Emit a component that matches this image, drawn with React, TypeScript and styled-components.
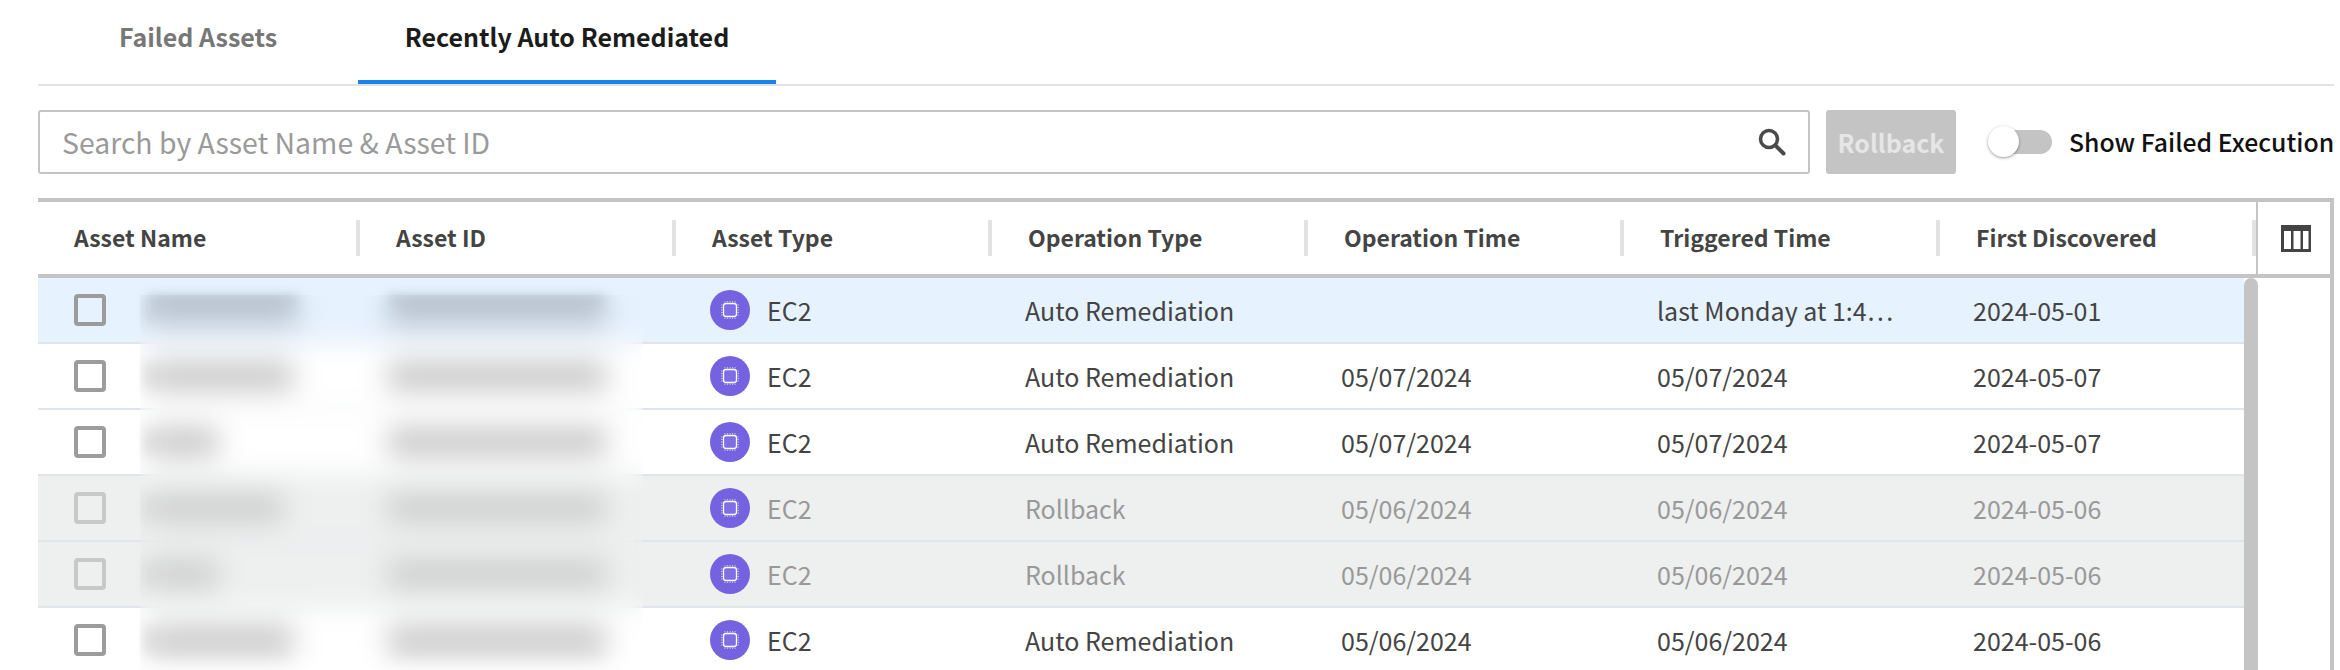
import styled, { createGlobalStyle } from "styled-components";

const FONT = `"Noto Sans CJK SC", "Noto Sans", sans-serif`;

const GlobalStyle = createGlobalStyle`
  html, body {
    margin: 0;
    padding: 0;
    background: #fff;
    overflow: hidden;
  }
  * {
    box-sizing: border-box;
  }
`;

const Page = styled.div`
  width: 2340px;
  height: 670px;
  overflow: hidden;
  padding-left: 38px;
  font-family: ${FONT};
  color: #444;
`;

const Tabs = styled.div`
  display: flex;
  width: 2296px;
  height: 86px;
  border-bottom: 2px solid #e2e2e2;
`;

const Tab = styled.div<{ $active?: boolean; $width: number }>`
  width: ${(p) => p.$width}px;
  height: 84px;
  display: flex;
  align-items: center;
  justify-content: center;
  padding-bottom: 9px;
  font-size: 25px;
  font-weight: 700;
  color: ${(p) => (p.$active ? "#1c1c1c" : "#777")};
  border-bottom: 4px solid ${(p) => (p.$active ? "#1b84ec" : "transparent")};
`;

const Toolbar = styled.div`
  display: flex;
  align-items: center;
  height: 64px;
  margin-top: 24px;
`;

const SearchBox = styled.div`
  width: 1772px;
  height: 64px;
  flex: none;
  display: flex;
  align-items: center;
  padding: 0 22px;
  border: 2px solid #c4c4c4;
  border-radius: 3px;
`;

const SearchInput = styled.input`
  flex: 1;
  height: 46px;
  border: none;
  outline: none;
  padding: 0 0 2px;
  font-family: ${FONT};
  font-size: 28.4px;
  color: #444;

  &::placeholder {
    color: #9a9a9a;
    opacity: 1;
  }
`;

const RollbackButton = styled.button`
  width: 130px;
  height: 64px;
  flex: none;
  margin-left: 16px;
  border: none;
  border-radius: 3px;
  padding: 0;
  background: #c4c4c4;
  color: #e6e6e6;
  font-family: ${FONT};
  font-size: 25px;
  font-weight: 700;
`;

const Toggle = styled.div`
  position: relative;
  width: 60px;
  height: 24px;
  flex: none;
  margin-left: 36px;
  border-radius: 12px;
  background: #c4c4c4;
`;

const ToggleThumb = styled.div`
  position: absolute;
  left: -4px;
  top: -4px;
  width: 31px;
  height: 31px;
  border-radius: 50%;
  background: #fff;
  box-shadow: 0 1px 3px rgba(0, 0, 0, 0.4);
`;

const ToggleLabel = styled.div`
  margin-left: 17px;
  padding-bottom: 2px;
  font-size: 24.8px;
  font-weight: 500;
  color: #111;
  white-space: nowrap;
`;

const Table = styled.div`
  width: 2296px;
  margin-top: 24px;
  border-top: 4px solid #c4c4c4;
  border-right: 4px solid #c4c4c4;
`;

const HeaderRow = styled.div`
  display: flex;
  height: 76px;
  border-bottom: 4px solid #c4c4c4;
`;

const HeaderCells = styled.div`
  width: 2218px;
  display: grid;
  grid-template-columns: 322px repeat(6, 316px);
  align-items: center;
`;

const HeaderCell = styled.div`
  height: 36px;
  display: flex;
  align-items: center;
  padding: 0 0 2px 36px;
  border-right: 4px solid #e2e2e2;
  font-size: 23px;
  font-weight: 700;
  color: #444;
`;

const ColumnsButton = styled.div`
  flex: 1;
  display: flex;
  align-items: center;
  justify-content: center;
  border-left: 2px solid #c4c4c4;
  padding-left: 4px;
`;

const Body = styled.div`
  position: relative;
  display: flex;
  height: 400px;
  overflow: hidden;
`;

const Rows = styled.div`
  width: 2206px;
`;

const Row = styled.div<{ $tone?: "selected" | "disabled" }>`
  display: grid;
  grid-template-columns: 320px 316px 316px repeat(3, 316px) 306px;
  align-items: center;
  height: 66px;
  border-bottom: 2px solid #dfe5ea;
  font-size: 25px;
  color: ${(p) => (p.$tone === "disabled" ? "#999" : "#444")};
  background: ${(p) =>
    p.$tone === "selected"
      ? "#e6f2fe"
      : p.$tone === "disabled"
        ? "#eeefef"
        : "#fff"};
`;

const NameCell = styled.div`
  display: flex;
  align-items: center;
  padding-left: 36px;
`;

const Checkbox = styled.div<{ $disabled?: boolean }>`
  width: 32px;
  height: 32px;
  flex: none;
  border: 4px solid ${(p) => (p.$disabled ? "#c8c8c8" : "#9c9c9c")};
  border-radius: 4px;
`;

const Blob = styled.div<{ $width: number; $tone?: "selected" | "disabled" }>`
  width: ${(p) => p.$width}px;
  height: 28px;
  filter: blur(6px);
  background: ${(p) =>
    p.$tone === "selected"
      ? "#b4bfca"
      : p.$tone === "disabled"
        ? "#cdcdcd"
        : "#c6c6c6"};
`;

const NameBlob = styled(Blob)`
  margin-left: 42px;
`;

const IdCell = styled.div`
  padding-left: 30px;
`;

const TypeCell = styled.div`
  display: flex;
  align-items: center;
  gap: 17px;
  padding-left: 36px;
`;

const TextCell = styled.div`
  padding-left: 35px;
  white-space: nowrap;
`;

const RedactPane = styled.div`
  position: absolute;
  left: 102px;
  top: 17px;
  bottom: 0;
  width: 503px;
  backdrop-filter: blur(13px);
`;

const ScrollThumb = styled.div`
  width: 14px;
  height: 400px;
  flex: none;
  border-radius: 7px 7px 0 0;
  background: #c4c4c4;
`;

const SearchIcon = () => (
  <svg width="28" height="28" viewBox="0 0 28 28" fill="none" stroke="#4a4a4a">
    <circle cx="11" cy="11" r="8.500" strokeWidth="3.500" />
    <path d="M17.500 17.500L25.500 25.500" strokeWidth="4" strokeLinecap="round" />
  </svg>
);

const ColumnsIcon = () => (
  <svg width="30" height="27" viewBox="0 0 30 27" fill="#444">
    <path
      d="M0 0h30v27H0V0zm3 6v18h7V6H3zm9.500 0v18h7V6h-7zm9.500 0v18h5.500V6H22z"
      fillRule="evenodd"
    />
  </svg>
);

const ChipIcon = () => (
  <svg width="40" height="40" viewBox="0 0 40 40">
    <circle cx="20" cy="20" r="20" fill="#7562e0" />
    <rect x="13.500" y="13.500" width="13" height="13" rx="2.500" fill="#7f6de4" stroke="#fff" strokeWidth="1.300" />
    <path
      d="M15 11v1.500M17.500 11v1.500M20 11v1.500M22.500 11v1.500M25 11v1.500M15 27.500V29M17.500 27.500V29M20 27.500V29M22.500 27.500V29M25 27.500V29M11 15h1.500M11 17.500h1.500M11 20h1.500M11 22.500h1.500M11 25h1.500M27.500 15H29M27.500 17.500H29M27.500 20H29M27.500 22.500H29M27.500 25H29"
      stroke="#d8d2f7"
      strokeWidth="0.800"
    />
  </svg>
);

const COLUMNS = [
  "Asset Name",
  "Asset ID",
  "Asset Type",
  "Operation Type",
  "Operation Time",
  "Triggered Time",
  "First Discovered",
];

type Item = {
  nameWidth: number;
  operation: string;
  operationTime: string;
  triggered: string;
  discovered: string;
  tone?: "selected" | "disabled";
};

const ITEMS: Item[] = [
  { nameWidth: 150, operation: "Auto Remediation", operationTime: "", triggered: "last Monday at 1:4…", discovered: "2024-05-01", tone: "selected" },
  { nameWidth: 145, operation: "Auto Remediation", operationTime: "05/07/2024", triggered: "05/07/2024", discovered: "2024-05-07" },
  { nameWidth: 70, operation: "Auto Remediation", operationTime: "05/07/2024", triggered: "05/07/2024", discovered: "2024-05-07" },
  { nameWidth: 135, operation: "Rollback", operationTime: "05/06/2024", triggered: "05/06/2024", discovered: "2024-05-06", tone: "disabled" },
  { nameWidth: 70, operation: "Rollback", operationTime: "05/06/2024", triggered: "05/06/2024", discovered: "2024-05-06", tone: "disabled" },
  { nameWidth: 145, operation: "Auto Remediation", operationTime: "05/06/2024", triggered: "05/06/2024", discovered: "2024-05-06" },
];

const App = () => {
  return (
    <Page>
      <GlobalStyle />
      <Tabs>
        <Tab $width={320}>Failed Assets</Tab>
        <Tab $width={418} $active>
          Recently Auto Remediated
        </Tab>
      </Tabs>
      <Toolbar>
        <SearchBox>
          <SearchInput placeholder="Search by Asset Name & Asset ID" readOnly />
          <SearchIcon />
        </SearchBox>
        <RollbackButton>Rollback</RollbackButton>
        <Toggle>
          <ToggleThumb />
        </Toggle>
        <ToggleLabel>Show Failed Execution</ToggleLabel>
      </Toolbar>
      <Table>
        <HeaderRow>
          <HeaderCells>
            {COLUMNS.map((col) => (
              <HeaderCell key={col}>{col}</HeaderCell>
            ))}
          </HeaderCells>
          <ColumnsButton>
            <ColumnsIcon />
          </ColumnsButton>
        </HeaderRow>
        <Body>
          <Rows>
            {ITEMS.map((item, i) => (
              <Row key={i} $tone={item.tone}>
                <NameCell>
                  <Checkbox $disabled={item.tone === "disabled"} />
                  <NameBlob $width={item.nameWidth} $tone={item.tone} />
                </NameCell>
                <IdCell>
                  <Blob $width={218} $tone={item.tone} />
                </IdCell>
                <TypeCell>
                  <ChipIcon />
                  EC2
                </TypeCell>
                <TextCell>{item.operation}</TextCell>
                <TextCell>{item.operationTime}</TextCell>
                <TextCell>{item.triggered}</TextCell>
                <TextCell>{item.discovered}</TextCell>
              </Row>
            ))}
          </Rows>
          <ScrollThumb />
          <RedactPane />
        </Body>
      </Table>
    </Page>
  );
};

export default App;
